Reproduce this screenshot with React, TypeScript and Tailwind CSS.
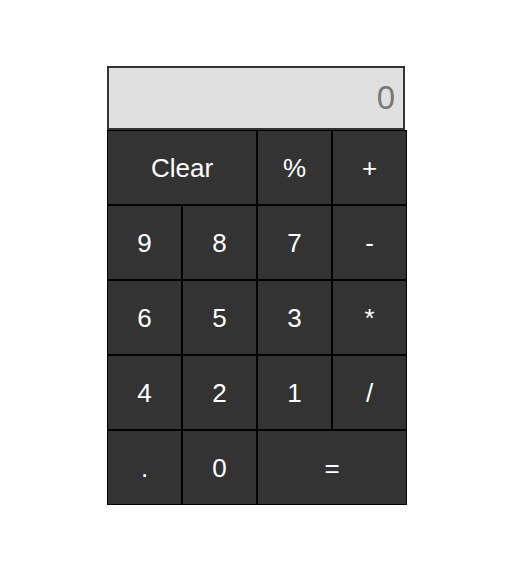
const KEYS: { label: string; wide?: boolean }[] = [
  { label: "Clear", wide: true },
  { label: "%" },
  { label: "+" },
  { label: "9" },
  { label: "8" },
  { label: "7" },
  { label: "-" },
  { label: "6" },
  { label: "5" },
  { label: "3" },
  { label: "*" },
  { label: "4" },
  { label: "2" },
  { label: "1" },
  { label: "/" },
  { label: "." },
  { label: "0" },
  { label: "=", wide: true },
];

export default function App() {
  return (
    <div
      className="min-h-[568px] bg-white pt-[66px]"
      style={{ fontFamily: '"Liberation Sans", Arial, sans-serif' }}
    >
      <div className="w-[303px] mx-auto">
        {/* Display */}
        <div className="w-[298px] h-[64px] bg-[#e0e0e0] border-2 border-[#333333] flex items-center justify-end pr-[8px] text-[33px] text-[#777777]">
          0
        </div>

        {/* Keypad */}
        <div className="grid grid-cols-[repeat(4,75px)] w-[300px]">
          {KEYS.map((k) => (
            <button
              key={k.label}
              className={
                "h-[75px] bg-[#333333] border border-black text-white text-[26px] flex items-center justify-center pt-[2px] " +
                (k.wide ? "col-span-2" : "")
              }
            >
              {k.label}
            </button>
          ))}
        </div>
      </div>
    </div>
  );
}
